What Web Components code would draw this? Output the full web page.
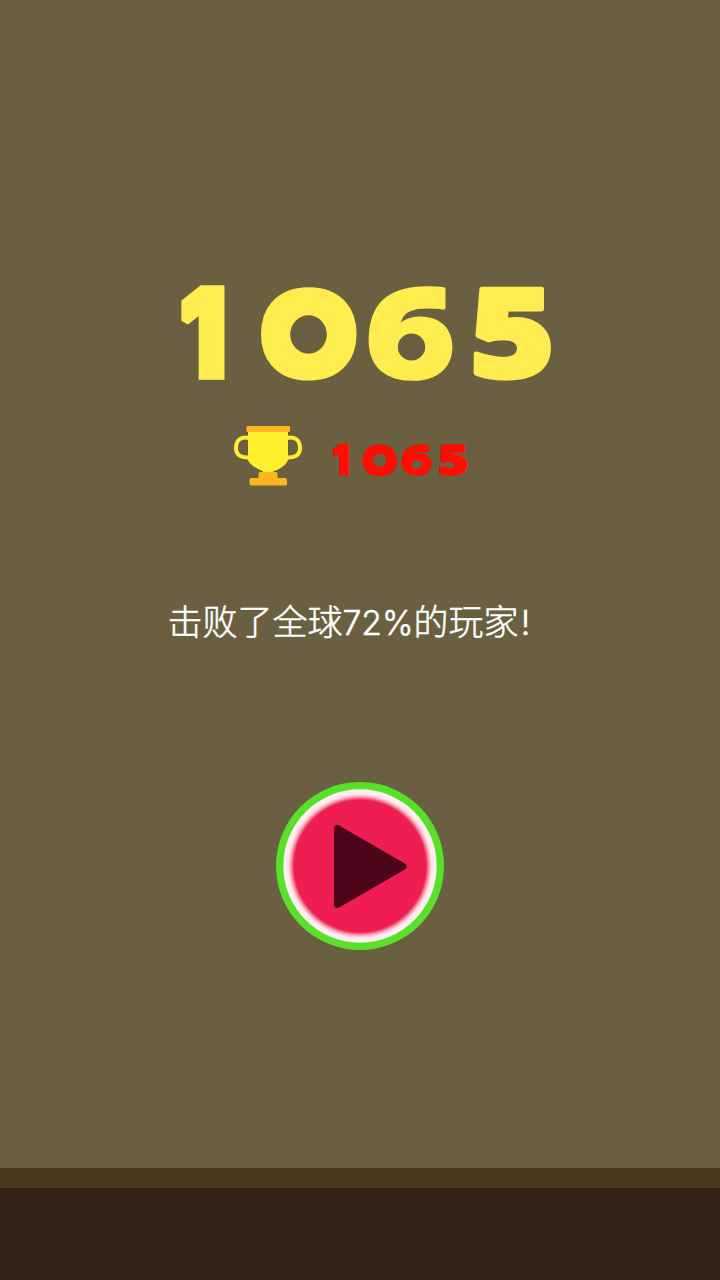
<!DOCTYPE html>
<html lang="zh-CN"><head><meta charset="utf-8"><title>1065</title>
<style>html,body{margin:0;height:100%;overflow:hidden}body{background:#6a5f40}.latin{font-family:Inter,sans-serif;font-size:33.7px}.mark{margin-left:2px}</style></head><body>
<game-over><score-digits slot="score" size="large"></score-digits><game-trophy slot="best"></game-trophy><score-digits slot="best" size="small"></score-digits><span slot="message">击败了全球<span class="latin">72%</span>的玩家<span class="latin mark">!</span></span><play-button slot="action"></play-button></game-over>
<script>
class GameOver extends HTMLElement{
 constructor(){super();this.attachShadow({mode:'open'}).innerHTML=`<style>
 :host{display:flex;flex-direction:column;align-items:center;width:720px;height:1280px;box-sizing:border-box;padding-top:285px;background:#6a5f40}
 .score{height:97px;display:flex;align-self:flex-start;margin-left:181px}
 .best{display:flex;align-self:flex-start;margin:44px 0 0 234px;gap:31px;height:60px;align-items:flex-start}
 .msg{align-self:flex-start;margin:108px 0 0 167.5px;height:52px;font:300 35px/52px "Noto Sans CJK SC",sans-serif;color:#fff;white-space:nowrap;-webkit-text-stroke:.5px #fff}
 .action{margin-top:136px;height:168px}
 .ground{margin-top:auto;width:100%;height:92px;border-top:20px solid #4b3820;background:#332217;flex:none}
 </style><div class="score"><slot name="score"></slot></div><div class="best"><slot name="best"></slot></div>
 <div class="msg"><slot name="message"></slot></div><div class="action"><slot name="action"></slot></div><div class="ground"></div>`}
}
customElements.define('game-over',GameOver);

// Each digit's ink, outline included, is fitted to its own cell; hole is the round counter [cx, cy, rx, ry].
const CELLS=[
 {ch:'1',gap:0,top:0,w:44,h:95,weight:800,outline:8,font:'Inter',join:'miter'},
 {ch:'0',gap:35,top:2,w:97,h:94,weight:200,outline:28,font:'Inter',join:'round',hole:[48.5,47.5,18.3,19.2]},
 {ch:'6',gap:11,top:2,w:85,h:94,weight:800,outline:3,font:'Open Sans',join:'round',hole:[43.5,60,13.7,13.5]},
 {ch:'5',gap:20,top:3,w:78,h:93,weight:800,outline:4,font:'Open Sans',join:'round'}];
class ScoreDigits extends HTMLElement{
 constructor(){super();this.attachShadow({mode:'open'}).innerHTML=`<style>
 :host{display:flex;color:#ffec4e}:host([size=small]){color:#ff0d00;margin-top:17px}
 svg{display:block;overflow:visible;flex:none}
 text{font-size:100px;fill:currentColor;stroke:currentColor;stroke-miterlimit:2}
 </style>`;}
 connectedCallback(){
  const small=this.getAttribute('size')==='small',kx=small?134/370:1,ky=small?33/96:1;
  const c=document.createElement('canvas').getContext('2d');
  let out='';
  for(const {ch,gap,top,w,h,weight,outline:s,font,join,hole} of CELLS){
   c.font=`${weight} 100px "${font}"`;
   const m=c.measureText(ch),iw=m.actualBoundingBoxLeft+m.actualBoundingBoxRight,ih=m.actualBoundingBoxAscent+m.actualBoundingBoxDescent;
   const sx=w/(iw+s),sy=h/(ih+s);
   const mask=hole?`<mask id="m${ch}" maskUnits="userSpaceOnUse" x="-5" y="-5" width="120" height="120"><rect x="-5" y="-5" width="120" height="120" fill="#fff"/><ellipse cx="${hole[0]}" cy="${hole[1]}" rx="${hole[2]}" ry="${hole[3]}" fill="#000"/></mask>`:'';
   out+=`<svg width="${w*kx}" height="${h*ky}" viewBox="0 0 ${w} ${h}" preserveAspectRatio="none" style="margin:${top*ky}px 0 0 ${gap*kx}px">${mask}<g ${hole?`mask="url(#m${ch})"`:''}><text font-family="${font}, sans-serif" font-weight="${weight}" stroke-width="${s}" stroke-linejoin="${join}" transform="translate(${(s/2+m.actualBoundingBoxLeft)*sx} ${(s/2+m.actualBoundingBoxAscent)*sy}) scale(${sx} ${sy})">${ch}</text></g></svg>`;
  }
  this.shadowRoot.innerHTML+=out;
 }
}
customElements.define('score-digits',ScoreDigits);

class GameTrophy extends HTMLElement{
 constructor(){super();this.attachShadow({mode:'open'}).innerHTML=`<style>:host{display:block;width:68px;height:60px}svg{display:block}</style>
 <svg width="68" height="60" viewBox="0 0 68 60"><g fill="none" stroke="#fff02e" stroke-width="4"><path d="M15 12C6 10 2 15 2 22C2 29 7 32 16 31.500M53 12C62 10 66 15 66 22C66 29 61 32 52 31.500"/></g>
 <path fill="#fff02e" d="M14 5H54V33C54 38 45 44 39.500 45V48H29V45C23 43 14 38 14 33Z"/><rect x="12.500" width="43.500" height="6" rx="1" fill="#ffb51f"/>
 <path fill="#ffb51f" d="M26 46H42Q43.500 46 43.500 47.500V52H51Q53 52 53 54V57.500Q53 59.500 51 59.500H17.500Q15.500 59.500 15.500 57.500V54Q15.500 52 17.500 52H24.500V47.500Q24.500 46 26 46Z"/></svg>`}
}
customElements.define('game-trophy',GameTrophy);

class PlayButton extends HTMLElement{
 constructor(){super();this.attachShadow({mode:'open'}).innerHTML=`<style>:host{display:block;width:168px;height:168px}svg{display:block}</style>
 <svg width="168" height="168" viewBox="0 0 168 168"><defs><radialGradient id="g"><stop offset=".86" stop-color="#ee1e53"/><stop offset=".9" stop-color="#fa97af"/><stop offset=".935" stop-color="#ffe9ea"/><stop offset="1" stop-color="#fff3f2"/></radialGradient></defs>
 <circle cx="84" cy="84" r="84" fill="#58e02a"/><circle cx="84" cy="84" r="76.700" fill="url(#g)"/>
 <path d="M61.500 46.500V122.500L127 84.500Z" fill="#4d041a" stroke="#4d041a" stroke-width="7" stroke-linejoin="round"/></svg>`}
}
customElements.define('play-button',PlayButton);
</script></body></html>
